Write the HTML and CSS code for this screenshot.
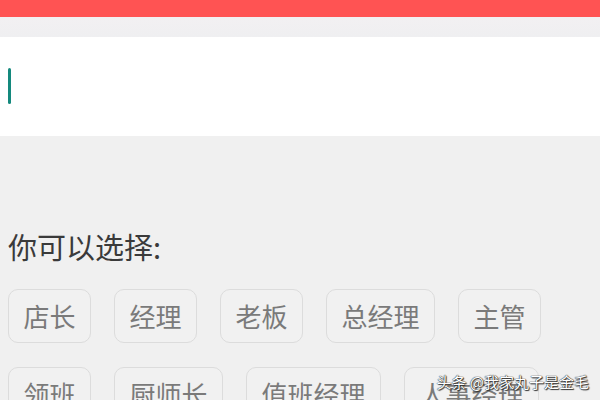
FILE: index.html
```html
<!DOCTYPE html>
<html lang="zh-CN">

<head>
    <meta charset="UTF-8">
    <meta name="viewport" content="width=device-width, initial-scale=1.0">
    <title>选择职位</title>
    <link rel="stylesheet" href="styles.css">
</head>

<body>
    <div class="status-bar"></div>
    <div class="tool-bar"></div>

    <section class="input-box">
        <span class="cursor"></span>
    </section>

    <main class="content">
        <h2 class="title">你可以选择:</h2>
        <div class="tags">
            <span class="tag">店长</span>
            <span class="tag">经理</span>
            <span class="tag">老板</span>
            <span class="tag">总经理</span>
            <span class="tag">主管</span>
            <span class="tag">领班</span>
            <span class="tag">厨师长</span>
            <span class="tag">值班经理</span>
            <span class="tag">人事经理</span>
        </div>
    </main>

    <p class="watermark">头条&nbsp;@我家丸子是金毛</p>
</body>

</html>
```

FILE: styles.css
```css
*,
*::before,
*::after {
  box-sizing: border-box;
}

html,
body {
  height: 100%;
  overflow: hidden;
}

body {
  margin: 0;
  background-color: #f0f0f0;
  font-family: "Noto Sans CJK SC", "Noto Sans", sans-serif;
  position: relative;
}

.status-bar {
  height: 17px;
  background-color: #ff5353;
}

.tool-bar {
  height: 20px;
  background: linear-gradient(#f2f0f2, #efeff1);
}

.input-box {
  height: 99px;
  background-color: #fff;
  padding: 31px 8px 0;
}

.cursor {
  display: block;
  width: 3px;
  height: 36px;
  border-radius: 2px;
  background-color: #14897d;
}

.content {
  padding: 0 8px;
}

.title {
  margin: 92px 0 25px;
  font-size: 29px;
  font-weight: 400;
  line-height: 36px;
  color: #3a3a3a;
}

.tags {
  display: flex;
  flex-wrap: wrap;
  gap: 24px 23px;
}

.tag {
  height: 54px;
  padding: 0 14.5px;
  border: 1px solid #dcdcdc;
  border-radius: 10px;
  background-color: #f1f1f1;
  font-size: 26px;
  line-height: 52px;
  color: #7a7a7a;
}

.watermark {
  position: absolute;
  right: 11px;
  bottom: 7px;
  margin: 0;
  font-size: 15px;
  line-height: 22px;
  color: #fff;
  text-shadow: 0 0 1px #222, 0 0 1px #222, 1px 1px 1px #333;
}
```
